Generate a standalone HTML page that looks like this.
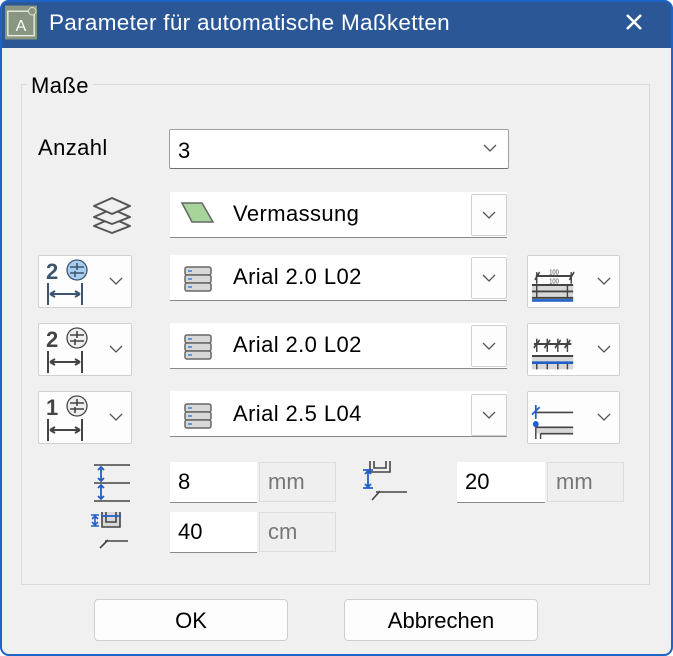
<!DOCTYPE html>
<html><head><meta charset="utf-8">
<style>
*{box-sizing:border-box;margin:0;padding:0}
body{width:673px;height:656px;background:#fff;font-family:"Liberation Sans",sans-serif;overflow:hidden;position:relative}
.win{position:absolute;left:0;top:0;width:673px;height:656px;border-radius:9px;background:#f0f0f0;overflow:hidden}
.frame{position:absolute;left:0;top:0;width:673px;height:656px;border:2px solid #1e63c6;border-radius:9px;pointer-events:none}
.tb{position:absolute;left:0;top:0;width:100%;height:48px;background:#2b5797}
.ab{position:absolute}
.box{position:absolute;background:#fdfdfd;border:1px solid #d0d0d0;border-radius:2px}
.cb{position:absolute;background:#fff;border-bottom:1px solid #8a8a8a}
.txt{position:absolute;font-size:22px;letter-spacing:0.4px;color:#000;white-space:nowrap}
.inp{position:absolute;background:#fff;border-bottom:1px solid #8a8a8a;font-size:22px;padding-left:8px;line-height:40px}
.unit{position:absolute;background:#efefef;border:1px solid #dcdcdc;font-size:22px;color:#777;padding-left:8px;line-height:38px}
.btn{position:absolute;background:#fdfdfd;border:1px solid #cfcfcf;border-radius:4px;font-size:22px;text-align:center;line-height:41px}
</style></head><body>
<div class="win">
<div class="tb"></div>
<svg class="ab" style="left:5px;top:5px" width="32" height="35" viewBox="0 0 34 36">
<rect x="0" y="0" width="34" height="36" fill="#8a9680"/>
<rect x="3" y="6" width="28" height="26" fill="none" stroke="#e8ece4" stroke-width="1.5"/>
<text x="17" y="27" font-size="17" fill="#fff" text-anchor="middle" font-family="Liberation Sans">A</text>
<circle cx="29" cy="6" r="4" fill="#8a9680" stroke="#dfe5d8" stroke-width="1"/>
</svg>
<div class="txt" style="left:49px;top:10px;color:#fff;font-size:22.5px;letter-spacing:0.3px">Parameter für automatische Maßketten</div>
<svg class="ab" style="left:624px;top:12px" width="20" height="20"><path d="M3 3L17 17M17 3L3 17" stroke="#fff" stroke-width="2.5"/></svg>

<div class="ab" style="left:21px;top:84px;width:629px;height:501px;border:1px solid #dadada"></div>
<div class="txt" style="left:27px;top:73px;background:#f0f0f0;padding:0 4px;">Maße</div>

<div class="txt" style="left:38px;top:135px">Anzahl</div>
<div class="ab" style="left:169px;top:129px;width:340px;height:40px;background:#fff;border:1px solid #a0a0a0;border-bottom-color:#707070;border-radius:2px"></div>
<div class="txt" style="left:178px;top:138px">3</div>
<svg class="ab" style="left:483px;top:144px" width="14" height="9"><path d="M1 1L7 7L13 1" fill="none" stroke="#555" stroke-width="1.3"/></svg>

<svg class="ab" style="left:90px;top:194px" width="44" height="42" viewBox="0 0 44 42">
<g fill="#f0f0f0" stroke="#555" stroke-width="2" stroke-linejoin="round">
<path d="M22 24L4 32L22 39L40 32Z"/>
<path d="M22 15L4 23L22 30L40 23Z"/>
<path d="M22 4L4 12L22 20L40 12Z"/>
</g></svg>

<div class="cb" style="left:170px;top:192px;width:337px;height:46px"></div>
<svg class="ab" style="left:180px;top:200px" width="36" height="26"><path d="M2 3L22 3L33 22L12 22Z" fill="#a6d49a" stroke="#666" stroke-width="1.5"/></svg>
<div class="txt" style="left:233px;top:201px">Vermassung</div>
<div class="box" style="left:471px;top:194px;width:36px;height:42px"></div>
<svg class="ab" style="left:482px;top:211px" width="14" height="9"><path d="M1 1L7 7L13 1" fill="none" stroke="#555" stroke-width="1.3"/></svg>

<div class="box" style="left:38px;top:255px;width:94px;height:53px"></div>
<div class="box" style="left:38px;top:323px;width:94px;height:53px"></div>
<div class="box" style="left:38px;top:391px;width:94px;height:53px"></div>
<svg class="ab" style="left:44px;top:257px" width="50" height="50" viewBox="0 0 50 50">
<text x="2" y="22" font-size="22" font-weight="bold" fill="#3d5570" font-family="Liberation Sans">2</text>
<circle cx="33" cy="13" r="10" fill="#a9cdee" stroke="#3d5570" stroke-width="1.3"/>
<path d="M26 10H40M26 16H40M33 6V13M31 14V20" stroke="#3d5570" stroke-width="1.6"/>
<path d="M4 26V48M38 26V48M6 37H36M6 37L11 34M6 37L11 40M36 37L31 34M36 37L31 40" stroke="#3d5570" stroke-width="2" fill="none"/>
</svg>
<svg class="ab" style="left:44px;top:325px" width="50" height="50" viewBox="0 0 50 50">
<text x="2" y="22" font-size="22" font-weight="bold" fill="#444" font-family="Liberation Sans">2</text>
<circle cx="33" cy="13" r="10" fill="#eee" stroke="#444" stroke-width="1.3"/>
<path d="M26 10H40M26 16H40M33 6V13M31 14V20" stroke="#444" stroke-width="1.6"/>
<path d="M4 26V48M38 26V48M6 37H36M6 37L11 34M6 37L11 40M36 37L31 34M36 37L31 40" stroke="#444" stroke-width="2" fill="none"/>
</svg>
<svg class="ab" style="left:44px;top:393px" width="50" height="50" viewBox="0 0 50 50">
<text x="2" y="22" font-size="22" font-weight="bold" fill="#444" font-family="Liberation Sans">1</text>
<circle cx="33" cy="13" r="10" fill="#eee" stroke="#444" stroke-width="1.3"/>
<path d="M26 10H40M26 16H40M33 6V13M31 14V20" stroke="#444" stroke-width="1.6"/>
<path d="M4 26V48M38 26V48M6 37H36M6 37L11 34M6 37L11 40M36 37L31 34M36 37L31 40" stroke="#444" stroke-width="2" fill="none"/>
</svg>
<svg class="ab" style="left:109px;top:277px" width="14" height="9"><path d="M1 1L7 7L13 1" fill="none" stroke="#555" stroke-width="1.3"/></svg>
<svg class="ab" style="left:109px;top:345px" width="14" height="9"><path d="M1 1L7 7L13 1" fill="none" stroke="#555" stroke-width="1.3"/></svg>
<svg class="ab" style="left:109px;top:413px" width="14" height="9"><path d="M1 1L7 7L13 1" fill="none" stroke="#555" stroke-width="1.3"/></svg>

<div class="cb" style="left:170px;top:255px;width:337px;height:46px"></div>
<div class="cb" style="left:170px;top:323px;width:337px;height:46px"></div>
<div class="cb" style="left:170px;top:391px;width:337px;height:46px"></div>
<svg class="ab" style="left:184px;top:266px" width="30" height="28"><g fill="#d8d8d8" stroke="#666" stroke-width="1.5"><rect x="1" y="1" width="26" height="8" rx="2"/><rect x="1" y="9" width="26" height="8" rx="2"/><rect x="1" y="17" width="26" height="8" rx="2"/></g><path d="M4 5H8M4 13H8M4 21H8" stroke="#3b7fd6" stroke-width="1.5"/></svg>
<svg class="ab" style="left:184px;top:334px" width="30" height="28"><g fill="#d8d8d8" stroke="#666" stroke-width="1.5"><rect x="1" y="1" width="26" height="8" rx="2"/><rect x="1" y="9" width="26" height="8" rx="2"/><rect x="1" y="17" width="26" height="8" rx="2"/></g><path d="M4 5H8M4 13H8M4 21H8" stroke="#3b7fd6" stroke-width="1.5"/></svg>
<svg class="ab" style="left:184px;top:403px" width="30" height="28"><g fill="#d8d8d8" stroke="#666" stroke-width="1.5"><rect x="1" y="1" width="26" height="8" rx="2"/><rect x="1" y="9" width="26" height="8" rx="2"/><rect x="1" y="17" width="26" height="8" rx="2"/></g><path d="M4 5H8M4 13H8M4 21H8" stroke="#3b7fd6" stroke-width="1.5"/></svg>
<div class="txt" style="left:233px;top:264px">Arial 2.0 L02</div>
<div class="txt" style="left:233px;top:332px">Arial 2.0 L02</div>
<div class="txt" style="left:233px;top:401px">Arial 2.5 L04</div>
<div class="box" style="left:471px;top:257px;width:36px;height:42px"></div>
<div class="box" style="left:471px;top:325px;width:36px;height:42px"></div>
<div class="box" style="left:471px;top:394px;width:36px;height:42px"></div>
<svg class="ab" style="left:482px;top:274px" width="14" height="9"><path d="M1 1L7 7L13 1" fill="none" stroke="#555" stroke-width="1.3"/></svg>
<svg class="ab" style="left:482px;top:342px" width="14" height="9"><path d="M1 1L7 7L13 1" fill="none" stroke="#555" stroke-width="1.3"/></svg>
<svg class="ab" style="left:482px;top:411px" width="14" height="9"><path d="M1 1L7 7L13 1" fill="none" stroke="#555" stroke-width="1.3"/></svg>

<div class="box" style="left:527px;top:255px;width:93px;height:53px"></div>
<div class="box" style="left:527px;top:323px;width:93px;height:53px"></div>
<div class="box" style="left:527px;top:391px;width:93px;height:53px"></div>
<svg class="ab" style="left:531px;top:267px" width="46" height="36" viewBox="0 0 48 28" preserveAspectRatio="none">
<rect x="1" y="14" width="43" height="10" fill="#d8d8d8"/>
<path d="M6 4V13M42 4V13M4 10L9 4M40 10L45 4M5 7H43M1 14H44M1 19H44M1 24H44M6 14V24M38 14V24" stroke="#444" stroke-width="1.5" fill="none"/>
<path d="M1 26H44" stroke="#1e5fc9" stroke-width="2"/>
<text x="24" y="6" font-size="6" fill="#444" text-anchor="middle" font-family="Liberation Sans">100</text>
<text x="24" y="13" font-size="6" fill="#444" text-anchor="middle" font-family="Liberation Sans">100</text>
</svg>
<svg class="ab" style="left:531px;top:336px" width="46" height="36" viewBox="0 0 48 27" preserveAspectRatio="none">
<rect x="1" y="15" width="43" height="10" fill="#d8d8d8"/>
<path d="M6 2V12M17 2V12M28 2V12M38 2V12M3 9L9 3M14 9L20 3M25 9L31 3M35 9L41 3M3 6H42M1 15H44M6 19V25M17 19V25M28 19V25M38 19V25" stroke="#444" stroke-width="1.5" fill="none"/>
<path d="M1 20H44" stroke="#1e5fc9" stroke-width="2"/>
</svg>
<svg class="ab" style="left:531px;top:404px" width="46" height="36" viewBox="0 0 48 34" preserveAspectRatio="none">
<path d="M5 16V28H44V22H5" fill="#d8d8d8"/>
<path d="M5 8H44M5 22H44M10 28H44M10 28V33M5 22V33" stroke="#444" stroke-width="1.5" fill="none"/>
<path d="M5 1V14M1 10L9 3" stroke="#1e5fc9" stroke-width="1.8"/>
<circle cx="5" cy="19" r="3" fill="#1e5fc9"/>
</svg>
<svg class="ab" style="left:597px;top:277px" width="14" height="9"><path d="M1 1L7 7L13 1" fill="none" stroke="#555" stroke-width="1.3"/></svg>
<svg class="ab" style="left:597px;top:345px" width="14" height="9"><path d="M1 1L7 7L13 1" fill="none" stroke="#555" stroke-width="1.3"/></svg>
<svg class="ab" style="left:597px;top:413px" width="14" height="9"><path d="M1 1L7 7L13 1" fill="none" stroke="#555" stroke-width="1.3"/></svg>

<svg class="ab" style="left:90px;top:462px" width="40" height="42" viewBox="0 0 40 42">
<path d="M4 3H40M4 21H40M4 39H40" stroke="#444" stroke-width="1.6"/>
<path d="M11 5V19M11 23V37M8 8L11 5L14 8M8 16L11 19L14 16M8 26L11 23L14 26M8 34L11 37L14 34" stroke="#1e5fc9" stroke-width="1.8" fill="none"/>
</svg>
<svg class="ab" style="left:88px;top:511px" width="50" height="42" viewBox="0 0 50 42">
<path d="M14 1H32V16H14Z" fill="#d8d8d8"/>
<path d="M14 1V16H32V1M18 1V11H28V1" stroke="#444" stroke-width="1.6" fill="none"/>
<path d="M13 5H33" stroke="#1e5fc9" stroke-width="1.8"/>
<path d="M3 4H11M3 15H11M7 5V14M4 8L7 5L10 8M4 11L7 14L10 11" stroke="#1e5fc9" stroke-width="1.6" fill="none"/>
<path d="M17 30H40M12 37L20 29" stroke="#444" stroke-width="1.6"/>
</svg>
<svg class="ab" style="left:362px;top:460px" width="48" height="44" viewBox="0 0 48 44">
<path d="M8 1V12H28V1M12 1V8H24V1" stroke="#444" stroke-width="1.6" fill="none"/>
<path d="M1 10H11M1 28H11M6 11V27M3 14L6 11L9 14M3 24L6 27L9 24" stroke="#1e5fc9" stroke-width="1.8" fill="none"/>
<path d="M14 32H45M10 40L18 31" stroke="#444" stroke-width="1.6"/>
</svg>

<div class="inp" style="left:170px;top:462px;width:87px;height:41px">8</div>
<div class="unit" style="left:259px;top:462px;width:77px;height:40px">mm</div>
<div class="inp" style="left:457px;top:462px;width:88px;height:41px">20</div>
<div class="unit" style="left:547px;top:462px;width:77px;height:40px">mm</div>
<div class="inp" style="left:170px;top:512px;width:87px;height:41px">40</div>
<div class="unit" style="left:259px;top:512px;width:77px;height:40px">cm</div>

<div class="btn" style="left:94px;top:599px;width:194px;height:42px">OK</div>
<div class="btn" style="left:344px;top:599px;width:194px;height:42px">Abbrechen</div>
</div>
<div class="frame"></div>
</body></html>
